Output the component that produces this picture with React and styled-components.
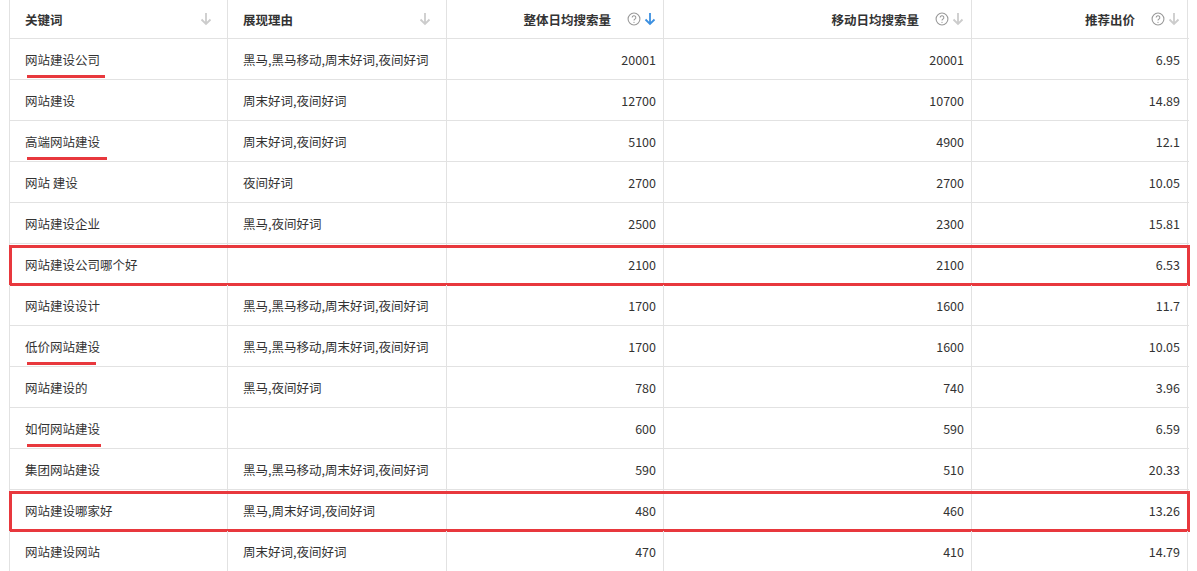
import React from "react";
import styled, { createGlobalStyle } from "styled-components";

const GlobalStyle = createGlobalStyle`
  html, body { margin: 0; background: #fff; }
  body { font-family: "Noto Sans CJK SC", "Liberation Sans", sans-serif; }
`;

const rows = [
  ["网站建设公司", "黑马,黑马移动,周末好词,夜间好词", "20001", "20001", "6.95", "u", 78],
  ["网站建设", "周末好词,夜间好词", "12700", "10700", "14.89"],
  ["高端网站建设", "周末好词,夜间好词", "5100", "4900", "12.1", "u", 80],
  ["网站 建设", "夜间好词", "2700", "2700", "10.05"],
  ["网站建设企业", "黑马,夜间好词", "2500", "2300", "15.81"],
  ["网站建设公司哪个好", "", "2100", "2100", "6.53", "box"],
  ["网站建设设计", "黑马,黑马移动,周末好词,夜间好词", "1700", "1600", "11.7"],
  ["低价网站建设", "黑马,黑马移动,周末好词,夜间好词", "1700", "1600", "10.05", "u", 69],
  ["网站建设的", "黑马,夜间好词", "780", "740", "3.96"],
  ["如何网站建设", "", "600", "590", "6.59", "u", 74],
  ["集团网站建设", "黑马,黑马移动,周末好词,夜间好词", "590", "510", "20.33"],
  ["网站建设哪家好", "黑马,周末好词,夜间好词", "480", "460", "13.26", "box"],
  ["网站建设网站", "周末好词,夜间好词", "470", "410", "14.79"],
];

const Page = styled.div`
  padding-left: 9px;
  width: 1180px;
`;

const Row = styled.div`
  position: relative;
  display: grid;
  grid-template-columns: 218px 219px 217px 308px 217px;
  height: ${(p) => (p.$head ? 39 : 41)}px;
  border-bottom: 1px solid #e2e2e2;
  box-sizing: border-box;
  ${(p) =>
    p.$box &&
    `&::after {
      content: "";
      position: absolute;
      left: 0; right: -1px; top: 1px; bottom: -2px;
      border: 3px solid #e8383d;
      pointer-events: none;
    }`}
`;

const Cell = styled.div`
  display: flex;
  align-items: center;
  justify-content: ${(p) => (p.$right ? "flex-end" : "space-between")};
  padding: 0 ${(p) => (p.$right ? 7 : 15)}px 0 15px;
  border-left: 1px solid #e2e2e2;
  border-right: ${(p) => (p.$last ? "1px solid #e2e2e2" : "none")};
  font-size: 12.5px;
  color: #333;
  font-weight: ${(p) => (p.$head ? 700 : 400)};
  white-space: nowrap;
`;

const Keyword = styled.span`
  position: relative;
  &::after {
    content: "";
    display: ${(p) => (p.$u ? "block" : "none")};
    position: absolute;
    left: 2px;
    top: 25px;
    width: ${(p) => p.$u}px;
    height: 3px;
    background: #e8383d;
  }
`;

const Icons = styled.span`
  display: inline-flex;
  align-items: center;
  gap: 3px;
  margin-left: 16px;
`;

const Help = () => (
  <svg width="14" height="14" viewBox="0 0 13 13">
    <circle cx="6.5" cy="6.5" r="5.5" fill="none" stroke="#999" strokeWidth="1" />
    <path d="M4.8 5.2a1.7 1.7 0 1 1 2.4 1.5c-.5.3-.7.6-.7 1.2" fill="none" stroke="#999" strokeWidth="1" />
    <circle cx="6.5" cy="9.6" r="0.6" fill="#999" />
  </svg>
);

const Arrow = ({ color = "#ccc" }) => (
  <svg width="12" height="14" viewBox="0 0 12 14">
    <path d="M6 1v11M1.5 7.5L6 12l4.5-4.5" fill="none" stroke={color} strokeWidth="1.8" />
  </svg>
);

export default function App() {
  return (
    <Page>
      <GlobalStyle />
      <Row $head>
        <Cell $head>关键词<Arrow /></Cell>
        <Cell $head>展现理由<Arrow /></Cell>
        <Cell $head $right>整体日均搜索量<Icons><Help /><Arrow color="#3b8fe0" /></Icons></Cell>
        <Cell $head $right>移动日均搜索量<Icons><Help /><Arrow /></Icons></Cell>
        <Cell $head $right $last>推荐出价<Icons><Help /><Arrow /></Icons></Cell>
      </Row>
      {rows.map((r, i) => (
        <Row key={i} $box={r[5] === "box"}>
          <Cell><Keyword $u={r[5] === "u" ? r[6] : 0}>{r[0]}</Keyword></Cell>
          <Cell>{r[1]}</Cell>
          <Cell $right>{r[2]}</Cell>
          <Cell $right>{r[3]}</Cell>
          <Cell $right $last>{r[4]}</Cell>
        </Row>
      ))}
    </Page>
  );
}
